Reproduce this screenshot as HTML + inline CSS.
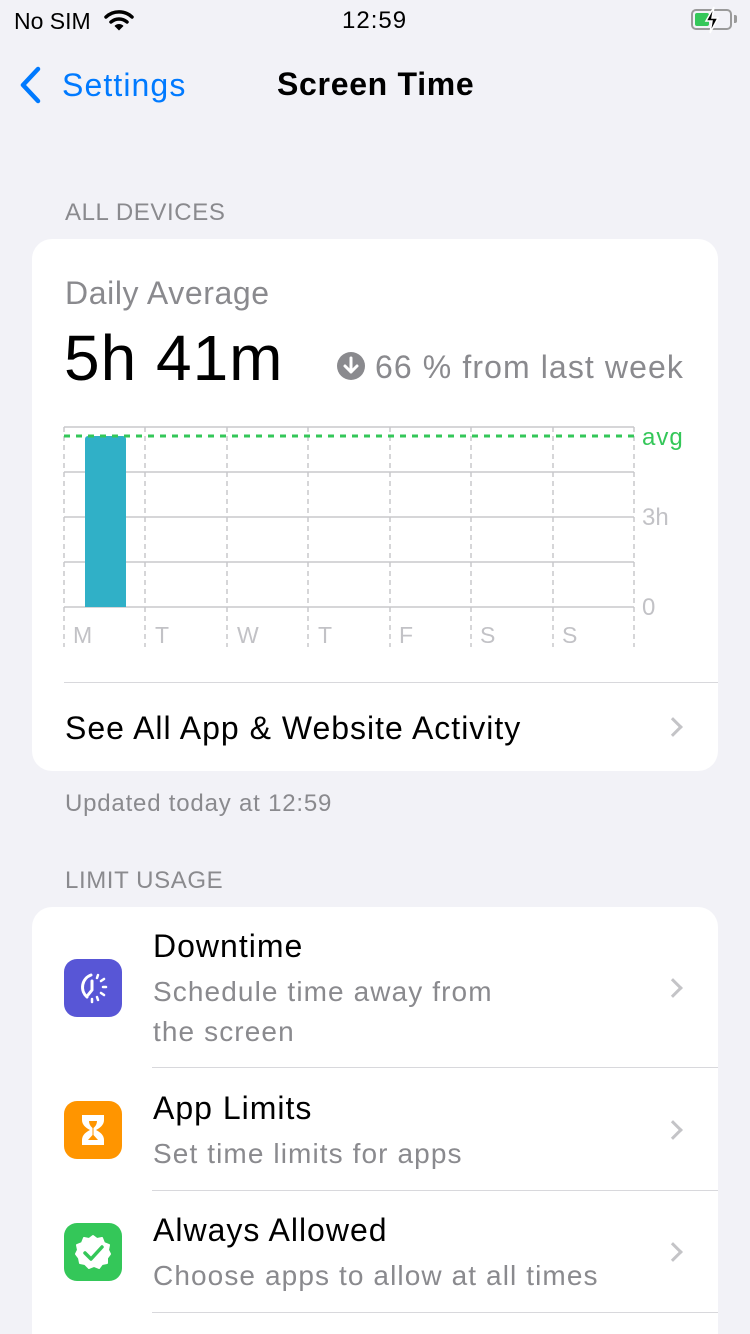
<!DOCTYPE html>
<html><head><meta charset="utf-8"><style>
*{margin:0;padding:0;box-sizing:border-box}
html,body{width:750px;height:1334px;overflow:hidden}
body{background:#f2f2f7;font-family:"Liberation Sans",sans-serif;position:relative;color:#000}
.a{position:absolute;white-space:nowrap}
.card{position:absolute;left:32px;width:686px;background:#fff;border-radius:20px;overflow:hidden}
.hdr{font-size:24px;color:#8a8a8e;letter-spacing:.6px}
.chev{position:absolute;width:14px;height:14px;border-right:3px solid #c4c4c7;border-top:3px solid #c4c4c7;transform:rotate(45deg)}
.t{font-size:32px;letter-spacing:1px}
.s{font-size:28px;color:#8a8a8e;letter-spacing:1.1px}
.icon{position:absolute;left:32px;width:58px;height:58px;border-radius:13px}
</style></head><body>
<div class="a" style="left:14px;top:8px;font-size:23px">No SIM</div>
<svg class="a" style="left:104px;top:9px" width="30" height="22" viewBox="0 0 30 22"><path d="M2 8 A19 19 0 0 1 28 8" stroke="#000" stroke-width="3.5" fill="none" stroke-linecap="round"/><path d="M7 13 A12 12 0 0 1 23 13" stroke="#000" stroke-width="3.5" fill="none" stroke-linecap="round"/><path d="M10.5 17 L15 21.5 L19.5 17 A6 6 0 0 0 10.5 17Z" fill="#000"/></svg>
<div class="a" style="left:342px;top:7px;font-size:24px;letter-spacing:1px">12:59</div>
<div class="a" style="left:691px;top:9px;width:41px;height:21px;border:2px solid #9a9a9a;border-radius:5px"><div style="position:absolute;left:2px;top:2px;width:14px;height:13px;background:#34c759;border-radius:2px"></div></div>
<div class="a" style="left:734px;top:15px;width:3px;height:8px;background:#9a9a9a;border-radius:0 2px 2px 0"></div>
<svg class="a" style="left:703px;top:6px" width="18" height="28" viewBox="0 0 18 28"><path d="M11 1 L3 15 H9 L7 27 L15 12 H9 Z" fill="#000" stroke="#fff" stroke-width="1.5"/></svg>
<svg class="a" style="left:18px;top:66px" width="26" height="38" viewBox="0 0 26 38"><path d="M20 3 L5 19 L20 35" stroke="#007aff" stroke-width="4.5" fill="none" stroke-linecap="round" stroke-linejoin="round"/></svg>
<div class="a" style="left:62px;top:67px;font-size:32px;color:#007aff;letter-spacing:1.1px">Settings</div>
<div class="a" style="left:277px;top:66px;font-size:32px;font-weight:bold;letter-spacing:.7px">Screen Time</div>
<div class="a hdr" style="left:65px;top:199px">ALL DEVICES</div>
<div class="card" style="top:239px;height:532px">
<div class="a" style="left:33px;top:36px;font-size:32px;color:#8a8a8e;letter-spacing:.6px">Daily Average</div>
<div class="a" style="left:32px;top:82px;font-size:64px;letter-spacing:1px">5h 41m</div>
<svg class="a" style="left:304px;top:112px" width="30" height="30" viewBox="0 0 30 30"><circle cx="15" cy="15" r="14" fill="#8a8a8e"/><path d="M15 7 V21 M9 15 L15 21 L21 15" stroke="#fff" stroke-width="3" fill="none" stroke-linecap="round" stroke-linejoin="round"/></svg>
<div class="a" style="left:343px;top:110px;font-size:32px;color:#8a8a8e;letter-spacing:1.1px">66 % from last week</div>
<svg class="a" style="left:0;top:180px" width="686" height="230">
<g stroke="#c8c8cc" stroke-width="1.5">
<line x1="32" y1="8" x2="602" y2="8"/><line x1="32" y1="53" x2="602" y2="53"/><line x1="32" y1="98" x2="602" y2="98"/><line x1="32" y1="143" x2="602" y2="143"/><line x1="32" y1="188" x2="602" y2="188"/>
</g>
<g stroke="#c8c8cc" stroke-width="1.5" stroke-dasharray="5,4">
<line x1="32" y1="8" x2="32" y2="228"/><line x1="113" y1="8" x2="113" y2="228"/><line x1="195" y1="8" x2="195" y2="228"/><line x1="276" y1="8" x2="276" y2="228"/><line x1="358" y1="8" x2="358" y2="228"/><line x1="439" y1="8" x2="439" y2="228"/><line x1="521" y1="8" x2="521" y2="228"/><line x1="602" y1="8" x2="602" y2="228"/>
</g>
<path d="M53 188 V20 a3 3 0 0 1 3 -3 H91 a3 3 0 0 1 3 3 V188Z" fill="#30b0c7"/>
<line x1="32" y1="17" x2="602" y2="17" stroke="#34c759" stroke-width="3" stroke-dasharray="6,6"/>
<g font-family="Liberation Sans" font-size="23" fill="#c2c2c6">
<text x="41" y="224">M</text><text x="123" y="224">T</text><text x="205" y="224">W</text><text x="286" y="224">T</text><text x="367" y="224">F</text><text x="448" y="224">S</text><text x="530" y="224">S</text>
<text x="610" y="106" font-size="24">3h</text><text x="610" y="196" font-size="24">0</text>
</g>
<text x="610" y="26" font-family="Liberation Sans" font-size="24" fill="#34c759" letter-spacing="1">avg</text>
</svg>
<div class="a" style="left:32px;top:443px;width:654px;height:1px;background:#d8d8dc"></div>
<div class="a t" style="left:33px;top:471px">See All App &amp; Website Activity</div>
<div class="chev" style="left:634px;top:481px"></div>
</div>
<div class="a" style="left:65px;top:790px;font-size:24px;color:#8a8a8e;letter-spacing:.8px">Updated today at 12:59</div>
<div class="a hdr" style="left:65px;top:867px">LIMIT USAGE</div>
<div class="card" style="top:907px;height:460px">
<div class="icon" style="top:52px;background:#5856d6"><svg width="58" height="58" viewBox="0 0 58 58"><path d="M27 16 A13 13 0 0 0 23 38" stroke="#fff" stroke-width="3" fill="none" stroke-linecap="round"/><path d="M28 22 V31 L24 36" stroke="#fff" stroke-width="3" fill="none" stroke-linecap="round"/><g stroke="#fff" stroke-width="2.5" stroke-linecap="round"><line x1="34" y1="16" x2="33" y2="19"/><line x1="40" y1="20" x2="37" y2="22"/><line x1="42" y1="28" x2="39" y2="28"/><line x1="40" y1="36" x2="37" y2="34"/><line x1="34" y1="41" x2="33" y2="38"/><line x1="28" y1="43" x2="28" y2="40"/></g></svg></div>
<div class="a t" style="left:121px;top:21px">Downtime</div>
<div class="a s" style="left:121px;top:69px">Schedule time away from</div>
<div class="a s" style="left:121px;top:109px">the screen</div>
<div class="chev" style="left:634px;top:74px"></div>
<div class="a" style="left:120px;top:160px;width:566px;height:1px;background:#d8d8dc"></div>
<div class="icon" style="top:194px;background:#ff9500"><svg width="58" height="58" viewBox="0 0 58 58"><path d="M18 14 H40 V19 Q40 25 32 29 Q40 33 40 39 V44 H18 V39 Q18 33 26 29 Q18 25 18 19 Z" fill="#fff"/><path d="M25 20 H33 Q33 24 29.5 27 V34 L34 39 H24 L28.5 34 V27 Q25 24 25 20Z" fill="#ff9500"/></svg></div>
<div class="a t" style="left:121px;top:183px">App Limits</div>
<div class="a s" style="left:121px;top:231px">Set time limits for apps</div>
<div class="chev" style="left:634px;top:216px"></div>
<div class="a" style="left:120px;top:283px;width:566px;height:1px;background:#d8d8dc"></div>
<div class="icon" style="top:316px;background:#34c759"><svg width="58" height="58" viewBox="0 0 58 58"><path d="M29 13 L33 16 L38 15 L40 20 L45 22 L44 27 L46 31 L43 35 L43 40 L38 41 L35 45 L30 43 L25 45 L21 41 L16 40 L15 35 L12 31 L14 27 L13 22 L18 20 L20 15 L25 16Z" fill="#fff" stroke="#fff" stroke-width="2" stroke-linejoin="round"/><path d="M21 30 L27 36 L38 24" stroke="#34c759" stroke-width="3.5" fill="none" stroke-linecap="round" stroke-linejoin="round"/></svg></div>
<div class="a t" style="left:121px;top:305px">Always Allowed</div>
<div class="a s" style="left:121px;top:353px">Choose apps to allow at all times</div>
<div class="chev" style="left:634px;top:338px"></div>
<div class="a" style="left:120px;top:405px;width:566px;height:1px;background:#d8d8dc"></div>
</div>
</body></html>
